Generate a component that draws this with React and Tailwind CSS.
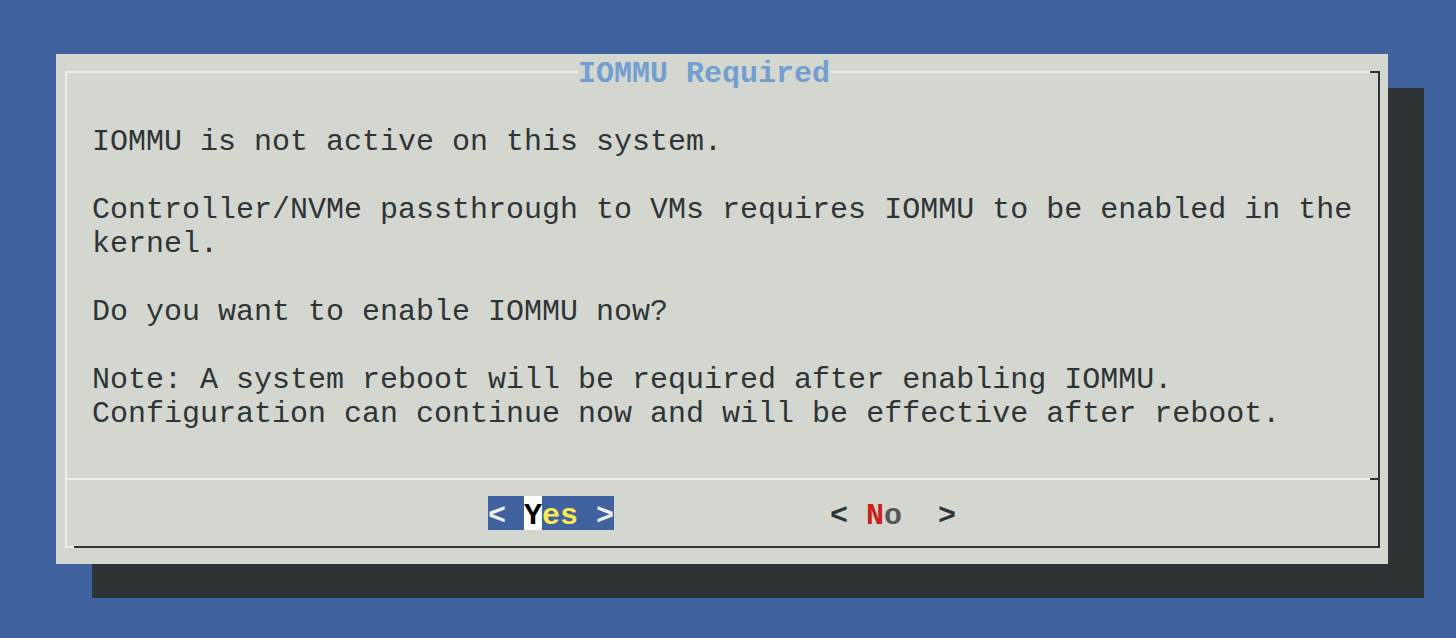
import React from 'react';

// whiptail-style dialog, drawn on a 18x34 character grid
const lines = [
  'IOMMU is not active on this system.',
  '',
  'Controller/NVMe passthrough to VMs requires IOMMU to be enabled in the',
  'kernel.',
  '',
  'Do you want to enable IOMMU now?',
  '',
  'Note: A system reboot will be required after enabling IOMMU.',
  'Configuration can continue now and will be effective after reboot.',
];

export default function App() {
  return (
    <div className="w-[1456px] h-[638px] bg-[#4063a0] pt-[54px] pl-[56px] font-['Liberation_Mono',monospace] text-[30px] leading-[40px] overflow-hidden">
      {/* Dialog panel with terminal drop shadow */}
      <div className="w-[1332px] h-[510px] bg-[#d3d7cf] shadow-[36px_34px_0_0_#2e3436] pl-[9px] pt-[17px]">
        <div className="w-[1315px] h-[477px] border-l-2 border-r-2 border-l-[#eeeeec] border-r-[#2e3436] flex flex-col">
          {/* Top border with title */}
          <div className="h-[2px] flex items-center">
            <div className="w-[511px] h-[2px] bg-[#eeeeec] shrink-0" />
            <span className="w-[252px] h-[34px] leading-[38px] shrink-0 font-bold text-[#729fcf] whitespace-pre">IOMMU Required</span>
            <div className="flex-1 h-[2px] bg-[#eeeeec]" />
            <div className="w-[8px] h-[2px] bg-[#2e3436] shrink-0" />
          </div>

          {/* Message */}
          <div className="pt-[49px] pl-[25px] text-[#2e3436]">
            {lines.map((l, i) => (
              <div key={i} className="h-[34px] whitespace-pre">{l}</div>
            ))}
          </div>

          {/* Separator */}
          <div className="mt-[50px] h-[2px] flex">
            <div className="flex-1 bg-[#eeeeec]" />
            <div className="w-[8px] bg-[#2e3436]" />
          </div>

          {/* Buttons */}
          <div className="mt-[16px] h-[34px] pl-[421px] flex font-bold whitespace-pre">
            <span className="flex h-[34px] bg-[#4063a0]">
              <span className="text-[#eeeeec]">{'< '}</span>
              <span className="h-[34px] bg-white text-black">Y</span>
              <span className="text-[#fce94f]">es</span>
              <span className="text-[#eeeeec]">{' >'}</span>
            </span>
            <span className="w-[216px]" />
            <span className="flex h-[34px] text-[#2e3436]">
              <span>{'< '}</span>
              <span className="text-[#cc2020]">N</span>
              <span className="text-[#555753]">o</span>
              <span>{'  >'}</span>
            </span>
          </div>

          {/* Bottom border */}
          <div className="mt-[16px] h-[2px] flex">
            <div className="w-[7px] bg-[#eeeeec]" />
            <div className="flex-1 bg-[#2e3436]" />
          </div>
        </div>
      </div>
    </div>
  );
}
